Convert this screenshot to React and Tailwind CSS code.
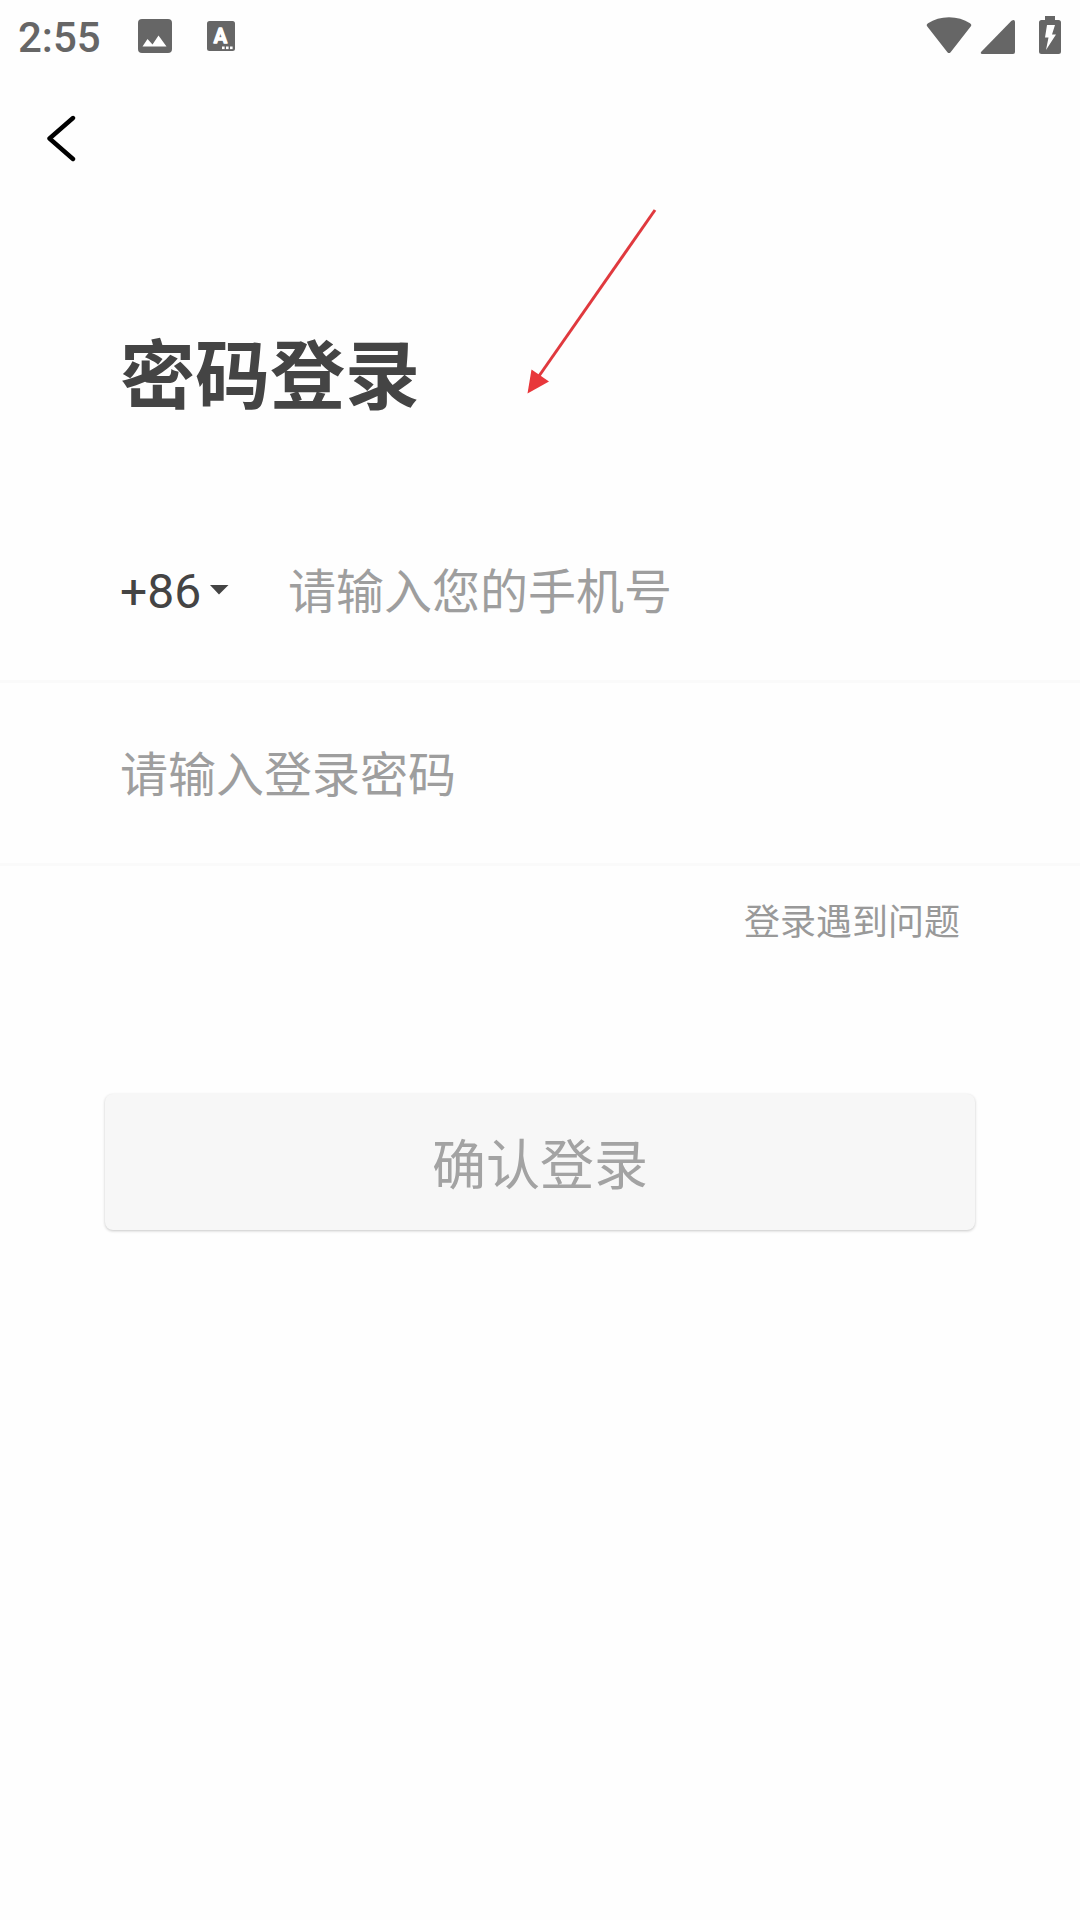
import React, { useState } from 'react';

const StatusBar = () => (
  <div className="flex h-18 items-center justify-between pl-[18px] pr-[19px] text-[#666666]">
    <div className="flex items-center">
      <span className="pt-1 text-[42px] leading-[48px] font-medium font-['Roboto',sans-serif]">2:55</span>
      {/* picture notification */}
      <svg className="ml-9 h-9 w-9" viewBox="0 0 36 36" aria-hidden="true">
        <rect x="1" y="1" width="34" height="34" rx="4" fill="currentColor" />
        <path d="M5.500 28.500 10.500 21l5 5.500 6-9 8 11z" fill="#fff" />
      </svg>
      {/* input method notification */}
      <svg className="ml-8 h-9 w-9" viewBox="0 0 36 36" aria-hidden="true">
        <rect x="2" y="3" width="28" height="30" rx="2.500" fill="currentColor" />
        <text
          x="15.500"
          y="24.500"
          textAnchor="middle"
          fontSize="20"
          fill="#fff"
          stroke="#fff"
          strokeWidth="1.600"
          strokeLinejoin="round"
          className="font-medium font-['Roboto',sans-serif]"
        >
          A
        </text>
        <rect x="17" y="28.500" width="2.600" height="2.600" fill="#fff" />
        <rect x="21" y="28.500" width="2.600" height="2.600" fill="#fff" />
        <rect x="25" y="28.500" width="2.600" height="2.600" fill="#fff" />
      </svg>
    </div>
    <div className="flex items-center">
      {/* wifi */}
      <svg className="h-10 w-[46px]" viewBox="0 0 46 40" aria-hidden="true">
        <path
          d="M1.300 10.600Q-.2 8.600 2 7.200C8 3.200 15 1.200 23 1.200s15 2 21 6q2.200 1.400.7 3.400L24.600 36.200q-1.600 1.800-3.200 0z"
          fill="currentColor"
        />
      </svg>
      {/* mobile signal */}
      <svg className="ml-2 h-10 w-9" viewBox="0 0 36 40" aria-hidden="true">
        <path d="M35 6v30q0 2-2 2H2.500q-3-.1-1-2.600L31.500 4.800Q34.800 2.700 35 6z" fill="currentColor" />
      </svg>
      {/* battery, charging */}
      <svg className="ml-[23px] h-10 w-[22px]" viewBox="0 0 22 40" aria-hidden="true">
        <path
          d="M6-1h10v5h3.500Q22 4 22 6.500v29q0 2.500-2.500 2.500h-17Q0 38 0 35.500v-29Q0 4 2.500 4H6z"
          fill="currentColor"
        />
        <path d="M8 9h8l-3 9.500h4L7 34l2.500-12.500H6z" fill="#fff" />
      </svg>
    </div>
  </div>
);

const App = () => {
  const [country, setCountry] = useState('+86');
  const [phone, setPhone] = useState('');
  const [password, setPassword] = useState('');

  const handleSubmit = (e) => {
    e.preventDefault();
  };

  return (
    <div className="min-h-screen bg-[#fefefe] font-['Noto_Sans_CJK_SC',sans-serif]">
      <StatusBar />

      <header className="flex h-33 items-center px-9">
        <button type="button" aria-label="返回" className="flex h-12 w-12 items-center justify-center">
          <svg className="h-12 w-12" viewBox="0 0 48 48" fill="none" aria-hidden="true">
            <path
              d="M37 4 13.500 24.500 37 45"
              stroke="#000"
              strokeWidth="4.400"
              strokeLinecap="round"
              strokeLinejoin="round"
            />
          </svg>
        </button>
      </header>

      <main className="relative pt-[114px]">
        <h1 className="px-30 text-[75px] leading-[106px] font-bold text-[#444444]">密码登录</h1>

        {/* pointer arrow */}
        <svg
          className="pointer-events-none absolute top-1 left-[526px] h-[188px] w-[132px]"
          viewBox="0 0 132 188"
          aria-hidden="true"
        >
          <path d="M129 2 13 168" stroke="#e0393e" strokeWidth="3" fill="none" />
          <path d="M5.500 161.500 23 173.500 1.500 185.500z" fill="#e8373b" />
        </svg>

        <form onSubmit={handleSubmit} className="pt-[76px]">
          <div className="flex items-center border-b-3 border-[#fafafa] px-30">
            <div className="relative">
              <select
                aria-label="国家区号"
                value={country}
                onChange={(e) => setCountry(e.target.value)}
                className="h-45 appearance-none bg-transparent pt-1 pr-8 text-[48px] text-[#444444] font-['Roboto',sans-serif] focus:outline-none"
              >
                <option value="+86">+86</option>
              </select>
              <svg
                className="pointer-events-none absolute top-1/2 right-1 h-5 w-5 -translate-y-1/2"
                viewBox="0 0 20 20"
                aria-hidden="true"
              >
                <path d="M0 5h18.500L9 14.500z" fill="#444444" />
              </svg>
            </div>
            <input
              type="tel"
              aria-label="手机号"
              placeholder="请输入您的手机号"
              value={phone}
              onChange={(e) => setPhone(e.target.value)}
              className="ml-[54px] h-45 min-w-0 flex-1 pb-1 text-[48px] text-[#444444] placeholder:text-[#9e9e9e] focus:outline-none"
            />
          </div>
          <div className="flex items-center border-b-3 border-[#fafafa] px-30">
            <input
              type="password"
              aria-label="登录密码"
              placeholder="请输入登录密码"
              value={password}
              onChange={(e) => setPassword(e.target.value)}
              className="h-45 min-w-0 flex-1 pb-1 text-[48px] text-[#444444] placeholder:text-[#9e9e9e] focus:outline-none"
            />
          </div>

          <div className="flex justify-end px-30 pt-[26px]">
            <a href="#help" className="text-[36px] leading-[54px] text-[#999999]">
              登录遇到问题
            </a>
          </div>

          <div className="px-[105px] pt-[148px]">
            <button
              type="submit"
              className="h-34 w-full rounded-lg bg-[#f7f7f7] text-[54px] leading-[80px] text-[#a3a3a3] shadow-[0_1px_3px_rgba(0,0,0,0.22)]"
            >
              确认登录
            </button>
          </div>
        </form>
      </main>
    </div>
  );
};

export default App;
